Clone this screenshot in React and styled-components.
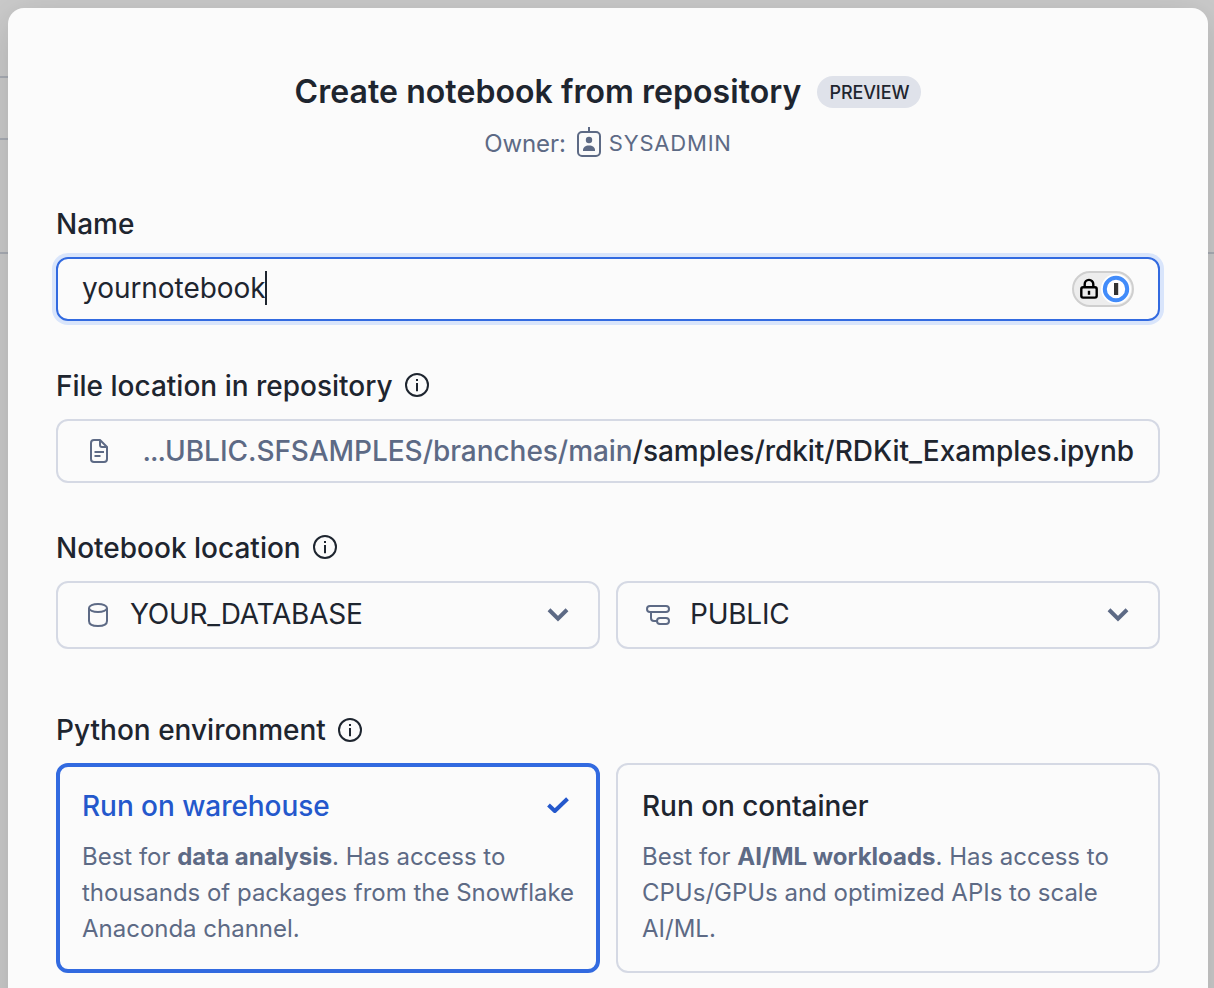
import React from "react";
import styled, { createGlobalStyle } from "styled-components";

const GlobalStyle = createGlobalStyle`
  *, *::before, *::after { box-sizing: border-box; }
  body {
    margin: 0;
    background: #cbcbcb;
    font-family: Inter, "Liberation Sans", sans-serif;
    color: #1e252f;
    -webkit-font-smoothing: antialiased;
  }
`;

const Page = styled.div`
  position: relative;
  height: 988px;
  overflow: hidden;
  padding: 8px 6px 0 8px;
`;

const Backdrop = styled.div`
  position: absolute;
  inset: 0;
  display: grid;
  grid-template-rows: 78px 62px 114px 1fr;
`;

const BackdropRow = styled.div`
  border-bottom: 2px solid #a9adb5;
  width: ${(p) => (p.$full ? "100%" : "50%")};
`;

const Dialog = styled.section`
  position: relative;
  height: 1100px;
  padding: 64px 48px 0;
  border-radius: 16px;
  background: #fbfbfb;
  box-shadow: 0 8px 40px rgba(0, 0, 0, 0.16);
`;

const Header = styled.header`
  display: flex;
  flex-direction: column;
  align-items: center;
`;

const TitleRow = styled.div`
  display: flex;
  align-items: center;
  gap: 16px;
  height: 40px;
`;

const Title = styled.h1`
  margin: 0;
  font-size: 32px;
  line-height: 40px;
  font-weight: 600;
  letter-spacing: 0.06px;
  white-space: nowrap;
`;

const Badge = styled.span`
  height: 32px;
  padding: 0 12px;
  border-radius: 16px;
  background: #dfe2ea;
  font-size: 18px;
  line-height: 33px;
  font-weight: 500;
  letter-spacing: -0.1px;
`;

const OwnerRow = styled.div`
  display: flex;
  align-items: center;
  height: 36px;
  margin-top: 14px;
  color: #5d6a85;
  font-size: 24px;
  line-height: 36px;
  letter-spacing: -0.1px;
`;

const RoleIcon = styled.svg`
  margin: -5px 8px 0 11px;
`;

const Role = styled.span`
  margin-top: -2px;
  font-size: 22px;
  letter-spacing: 0.8px;
`;

const Label = styled.div`
  display: flex;
  align-items: center;
  gap: 12px;
  height: 40px;
  margin: ${(p) => p.$top}px 0 13px;
  font-size: 28px;
  line-height: 40px;
  font-weight: 500;
  letter-spacing: 0;
`;

const Field = styled.div`
  display: flex;
  align-items: center;
  flex: 1;
  height: ${(p) => p.$height || 64}px;
  padding: 0 24px;
  border: 2px solid ${(p) => (p.$focused ? "#326ae0" : "#d5d9e4")};
  border-radius: 12px;
  font-size: 28px;
  white-space: nowrap;
  box-shadow: ${(p) => (p.$focused ? "0 0 0 4px #d9e5fb" : "none")};
`;

const InputText = styled.span`
  padding-bottom: 2px;
  letter-spacing: -0.05px;
`;

const Caret = styled.span`
  width: 2px;
  height: 34px;
  margin: -2px 0 0 -1px;
  background: #1e252f;
`;

const PasswordPill = styled.span`
  display: flex;
  align-items: center;
  justify-content: space-between;
  width: 62px;
  height: 36px;
  margin-left: auto;
  padding: 0 1px 0 6px;
  border: 2px solid #cfcfcf;
  border-radius: 18px;
  background: #ededed;
`;

const PathText = styled.span`
  margin-left: auto;
  font-weight: 500;
  letter-spacing: -0.04px;
`;

const PathMuted = styled.span`
  color: #5d6a85;
  letter-spacing: -0.05px;
`;

const Ellipsis = styled.span`
  letter-spacing: -1px;
`;

const Columns = styled.div`
  display: flex;
  gap: 16px;
`;

const SelectValue = styled.span`
  flex: 1;
  margin-left: 20px;
  padding-bottom: 2px;
  letter-spacing: -0.24px;
`;

const Card = styled.div`
  flex: 1;
  height: 210px;
  padding: ${(p) => (p.$selected ? "19px 22px" : "21px 24px")};
  border: ${(p) => (p.$selected ? "4px solid #326ae0" : "2px solid #d5d9e4")};
  border-radius: 12px;
`;

const CardTitle = styled.div`
  display: flex;
  align-items: center;
  justify-content: space-between;
  height: 40px;
  padding-right: 5px;
  color: ${(p) => (p.$selected ? "#2458cc" : "#1e252f")};
  font-size: 28px;
  font-weight: 500;
  letter-spacing: -0.05px;
`;

const CardText = styled.p`
  margin: 13px 0 0;
  color: #5d6a85;
  font-size: 24px;
  line-height: 36px;
  letter-spacing: -0.01px;
  white-space: nowrap;

  strong { font-weight: 700; }
`;

const RaisedIcon = styled.svg`
  margin-top: ${(p) => (p.$raised ? "-2px" : "0")};
`;

const InfoIcon = ({ raised }) => (
  <RaisedIcon $raised={raised} width="24" height="24" viewBox="0 0 24 24" fill="none" stroke="#1e252f">
    <circle cx="12" cy="12" r="11" strokeWidth="2" />
    <path d="M12 10v8.200M12 6v2" strokeWidth="2" />
  </RaisedIcon>
);

const BadgeIcon = () => (
  <RoleIcon width="24" height="30" viewBox="0 0 24 30" fill="none" stroke="#5d6a85" strokeWidth="2">
    <rect x="1" y="5" width="22" height="24" rx="4" />
    <path d="M12 0v5" />
    <g fill="#5d6a85" stroke="none">
      <circle cx="12" cy="13" r="3.2" />
      <path d="M6 24v-1c0-2.500 2.400-4.500 6-4.500s6 2 6 4.500v1z" />
    </g>
  </RoleIcon>
);

const LockIcon = () => (
  <svg width="18" height="22" viewBox="0 0 18 22" fill="none" stroke="#000" strokeWidth="2.4">
    <rect x="1.3" y="9.2" width="15.4" height="10.4" rx="1.8" />
    <path d="M4.7 9V6.200a4.300 4.300 0 0 1 8.600 0V9" />
    <path d="M9 12.800v4" />
  </svg>
);

const OnePasswordIcon = () => (
  <svg width="30" height="32" viewBox="0 0 30 32">
    <circle cx="15" cy="16" r="15" fill="#fff" />
    <circle cx="15" cy="16" r="11.2" fill="#fff" stroke="#428cfa" strokeWidth="4" />
    <rect x="13" y="10" width="4.2" height="12" fill="#333" />
  </svg>
);

const FileIcon = () => (
  <svg width="34" height="24" viewBox="-8 0 34 24" fill="none" stroke="#5d6a85" strokeWidth="2" strokeLinejoin="round">
    <path d="M10 1H4a3 3 0 0 0-3 3v16a3 3 0 0 0 3 3h10a3 3 0 0 0 3-3V8z" />
    <path d="M10 1v5a2 2 0 0 0 2 2h5M4.500 13h9.500M4.500 17h6" />
  </svg>
);

const DatabaseIcon = () => (
  <svg width="28" height="24" viewBox="-6 0 28 24" fill="none" stroke="#5d6a85" strokeWidth="2">
    <ellipse cx="10" cy="5" rx="9" ry="4" />
    <path d="M1 5v13c0 3 3 5 9 5s9-2 9-5V5" />
  </svg>
);

const SchemaIcon = () => (
  <svg width="28" height="20" viewBox="-6 0 28 20" fill="none" stroke="#5d6a85" strokeWidth="2">
    <rect x="-1" y="1" width="22" height="6" rx="3" />
    <rect x="9" y="13" width="12" height="6" rx="3" />
    <path d="M3 7v6a3 3 0 0 0 3 3h3" />
  </svg>
);

const ChevronIcon = () => (
  <svg width="32" height="16" viewBox="0 0 32 16" fill="none" stroke="#5d6a85" strokeWidth="4">
    <path d="M7 2.8l9 8.800 9-8.800" />
  </svg>
);

const CheckIcon = () => (
  <svg width="22" height="18" viewBox="0 0 22 18" fill="none" stroke="#2458cc" strokeWidth="4" strokeLinejoin="round">
    <path d="M1.500 8l6.300 6L20.500 1.700" />
  </svg>
);

export default function App() {
  return (
    <Page>
      <GlobalStyle />
      <Backdrop>
        <BackdropRow />
        <BackdropRow />
        <BackdropRow $full />
      </Backdrop>
      <Dialog>
        <Header>
          <TitleRow>
            <Title>Create notebook from repository</Title>
            <Badge>PREVIEW</Badge>
          </TitleRow>
          <OwnerRow>
            Owner:
            <BadgeIcon />
            <Role>SYSADMIN</Role>
          </OwnerRow>
        </Header>

        <Label $top={42}>Name</Label>
        <Field $focused>
          <InputText>yournotebook</InputText>
          <Caret />
          <PasswordPill>
            <LockIcon />
            <OnePasswordIcon />
          </PasswordPill>
        </Field>

        <Label $top={45}>
          File location in repository <InfoIcon raised />
        </Label>
        <Field>
          <FileIcon />
          <PathText>
            <PathMuted>
              <Ellipsis>...</Ellipsis>UBLIC.SFSAMPLES/branches/main
            </PathMuted>
            /samples/rdkit/RDKit_Examples.ipynb
          </PathText>
        </Field>

        <Label $top={45}>
          Notebook location <InfoIcon raised />
        </Label>
        <Columns>
          <Field $height={68}>
            <DatabaseIcon />
            <SelectValue>YOUR_DATABASE</SelectValue>
            <ChevronIcon />
          </Field>
          <Field $height={68}>
            <SchemaIcon />
            <SelectValue>PUBLIC</SelectValue>
            <ChevronIcon />
          </Field>
        </Columns>

        <Label $top={61}>
          Python environment <InfoIcon />
        </Label>
        <Columns>
          <Card $selected>
            <CardTitle $selected>
              Run on warehouse <CheckIcon />
            </CardTitle>
            <CardText>
              Best for <strong>data analysis</strong>. Has access to
              <br />
              thousands of packages from the Snowflake
              <br />
              Anaconda channel.
            </CardText>
          </Card>
          <Card>
            <CardTitle>Run on container</CardTitle>
            <CardText>
              Best for <strong>AI/ML workloads</strong>. Has access to
              <br />
              CPUs/GPUs and optimized APIs to scale
              <br />
              AI/ML.
            </CardText>
          </Card>
        </Columns>
      </Dialog>
    </Page>
  );
}
